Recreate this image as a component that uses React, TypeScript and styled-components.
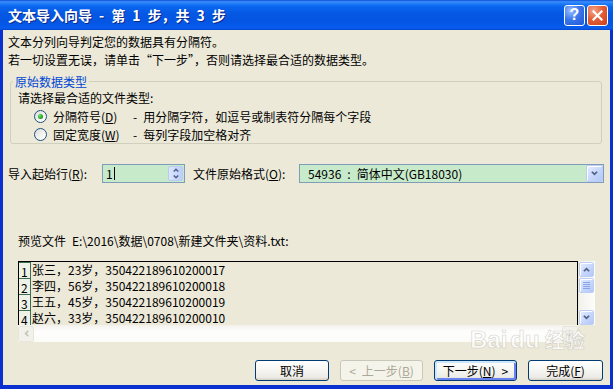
import React from "react";
import styled, { createGlobalStyle } from "styled-components";

const GlobalStyle = createGlobalStyle`
  html, body {
    margin: 0;
    padding: 0;
    background: #ece9d8;
  }
  body {
    font-family: "Noto Sans CJK SC", "Liberation Sans", sans-serif;
    font-size: 12px;
    color: #000;
  }
  * {
    box-sizing: border-box;
  }
`;

const Window = styled.div`
  position: relative;
  width: 613px;
  height: 389px;
  display: flex;
  flex-direction: column;
  overflow: hidden;
  background: #ece9d8;
`;

const TitleBar = styled.div`
  flex: none;
  height: 30px;
  display: flex;
  align-items: center;
  padding: 0 5px 0 8px;
  color: #fff;
  background: linear-gradient(
    to bottom,
    #0a4fd6 0%,
    #3d8ffc 6%,
    #1f7cf8 12%,
    #0a66ee 22%,
    #0558e4 45%,
    #0455e2 70%,
    #0559ea 88%,
    #0a5ef0 93%,
    #0446cd 100%
  );
`;

const TitleText = styled.div`
  flex: 1;
  font-size: 14px;
  font-weight: bold;
  white-space: pre;
  text-shadow: 1px 1px 0 #0c2a8a;
  line-height: 18px;
`;

const CaptionButton = styled.div<{ $kind: "help" | "close" }>`
  width: 21px;
  height: 21px;
  margin-left: 2px;
  border: 1px solid #fff;
  border-radius: 3px;
  display: flex;
  align-items: center;
  justify-content: center;
  color: #fff;
  font-family: "Liberation Sans", sans-serif;
  font-weight: bold;
  font-size: 16px;
  background: ${(p) =>
    p.$kind === "close"
      ? "radial-gradient(circle at 30% 25%, #f3a58c 0%, #e45f37 45%, #c7401a 100%)"
      : "radial-gradient(circle at 30% 25%, #9dc0ff 0%, #3b77ec 45%, #2157d6 100%)"};
`;

const Frame = styled.div`
  flex: 1;
  display: flex;
  flex-direction: column;
  border-style: solid;
  border-color: #0a30cf;
  border-width: 0 3px 4px 3px;
  padding: 3px 6px 0 5px;
`;

const Line = styled.div`
  line-height: 18px;
  white-space: pre;
`;

const GroupBox = styled.fieldset`
  margin: 5px 2px 0 2px;
  padding: 0 0 0 2px;
  border: 1px solid #d0d0bf;
  border-radius: 3px;
  min-width: 0;
`;

const Legend = styled.legend`
  padding: 0 2px;
  color: #0046d5;
  line-height: 15px;
`;

const Prompt = styled.div`
  margin-left: 5px;
  line-height: 18px;
`;

const RadioRow = styled.div`
  display: flex;
  align-items: center;
  height: 18px;
  padding-left: 21px;
  white-space: pre;
`;

const Radio = styled.span<{ $checked?: boolean }>`
  position: relative;
  width: 13px;
  height: 13px;
  border-radius: 50%;
  border: 1px solid #1c5180;
  background: linear-gradient(135deg, #dcdcd7 0%, #f3f3ef 55%, #ffffff 100%);
  flex: none;
  &::after {
    content: "";
    display: ${(p) => (p.$checked ? "block" : "none")};
    position: absolute;
    left: 3px;
    top: 3px;
    width: 5px;
    height: 5px;
    border-radius: 50%;
    background: radial-gradient(circle at 35% 35%, #6fe36f 0%, #21a121 60%, #1a8a1a 100%);
  }
`;

const RadioLabel = styled.span`
  width: 80px;
  margin-left: 6px;
`;

const Access = styled.span`
  text-decoration: underline;
`;

const ImportRow = styled.div`
  display: flex;
  align-items: center;
  height: 19px;
  margin-top: 20px;
`;

const FieldLabel = styled.span<{ $w: number }>`
  width: ${(p) => p.$w}px;
  flex: none;
  white-space: pre;
`;

const Spin = styled.div`
  width: 83px;
  height: 19px;
  margin-right: 8px;
  border: 1px solid #7f9db9;
  background: #c7ebca;
  display: flex;
  align-items: center;
`;

const SpinText = styled.div`
  flex: 1;
  padding-left: 3px;
  display: flex;
  align-items: center;
  line-height: 15px;
`;

const Caret = styled.span`
  width: 1px;
  height: 13px;
  margin-left: 1px;
  background: #000;
`;

const SpinButtons = styled.div`
  width: 15px;
  height: 15px;
  margin-right: 1px;
  display: flex;
  flex-direction: column;
  border: 1px solid #b9cbf3;
  border-radius: 2px;
  background: linear-gradient(to right, #dbe6fe, #bccefa);
  align-items: center;
  justify-content: space-around;
`;

const Combo = styled.div`
  flex: 1;
  height: 19px;
  border: 1px solid #7f9db9;
  background: #c7ebca;
  display: flex;
  align-items: center;
  padding-left: 8px;
  white-space: pre;
`;

const ComboText = styled.span`
  flex: 1;
`;

const XpArrowButton = styled.div<{ $w?: number; $h?: number }>`
  width: ${(p) => p.$w ?? 15}px;
  height: ${(p) => p.$h ?? 15}px;
  flex: none;
  display: flex;
  align-items: center;
  justify-content: center;
  border: 1px solid #bccdf6;
  border-radius: 2px;
  background: linear-gradient(135deg, #e6eefe 0%, #c9d8fc 50%, #b3c8f7 100%);
  box-shadow: inset 1px 1px 0 #fff;
`;

const PreviewLabel = styled.div`
  margin: 49px 0 0 10px;
  line-height: 18px;
  white-space: pre;
`;

const Preview = styled.div`
  margin: 11px 0 0 10px;
  width: 577px;
  display: grid;
  grid-template-columns: 560px 17px;
  grid-template-rows: 64px 17px;
`;

const ListBox = styled.div`
  border: 1px solid #000;
  border-bottom: none;
  background: #ece9d8;
  overflow: hidden;
`;

const DataRow = styled.div`
  display: flex;
  height: 16px;
`;

const RowNum = styled.div`
  width: 12px;
  flex: none;
  border-top: 1px solid #3d6e50;
  border-right: 1px solid #3d6e50;
  background: #eef1e6;
  padding: 2px 0 0 2px;
  line-height: 13px;
  font-size: 12px;
`;

const RowText = styled.div`
  padding-left: 1px;
  line-height: 16px;
  white-space: pre;
`;

const VScroll = styled.div`
  margin-left: 1px;
  display: flex;
  flex-direction: column;
  padding-top: 1px;
  background: linear-gradient(to right, #f3f1ec, #fdfdfb);
  gap: 1px;
`;

const Track = styled.div`
  flex: 1;
`;

const HScroll = styled.div`
  display: flex;
  justify-content: space-between;
  align-items: center;
  background: linear-gradient(to bottom, #f3f1ec, #fefefe 40%, #fbfbf8);
`;

const DisabledArrow = styled.div`
  width: 16px;
  height: 16px;
  display: flex;
  align-items: center;
  justify-content: center;
  border: 1px solid #e8e6dc;
  border-radius: 2px;
  background: #f2f1ea;
`;

const ButtonRow = styled.div`
  display: flex;
  justify-content: flex-end;
  gap: 11px;
  margin: 18px 1px 0 0;
`;

const DialogButton = styled.div<{ $w: number; $variant?: "default" | "disabled" }>`
  width: ${(p) => p.$w}px;
  height: 21px;
  display: flex;
  align-items: center;
  justify-content: center;
  white-space: pre;
  border: 1px solid ${(p) => (p.$variant === "disabled" ? "#c9c7ba" : "#003c74")};
  border-radius: 3px;
  color: ${(p) => (p.$variant === "disabled" ? "#aca899" : "#000")};
  background: ${(p) =>
    p.$variant === "disabled"
      ? "#f5f4ea"
      : "linear-gradient(to bottom, #ffffff 0%, #f7f7f4 40%, #ecebe6 85%, #d6d0c5 100%)"};
  box-shadow: ${(p) =>
    p.$variant === "default"
      ? "inset 1px 1px 0 1px #cee7ff, inset -1px -1px 0 1px #6982ee"
      : "none"};
`;

const Watermark = styled.div`
  position: absolute;
  left: 470px;
  top: 326px;
  display: flex;
  align-items: flex-end;
  gap: 3px;
  color: rgba(255, 255, 255, 0.75);
  -webkit-text-stroke: 0.6px rgba(190, 188, 178, 0.7);
  font-family: "Liberation Sans", sans-serif;
  font-weight: bold;
  font-size: 24px;
  line-height: 28px;
  pointer-events: none;
`;

const WatermarkCjk = styled.span`
  font-family: "Noto Sans CJK SC", sans-serif;
  font-size: 20px;
  margin-left: 2px;
`;

const Chevron = ({ dir, color = "#4d6185", size = 7 }: { dir: "up" | "down" | "left" | "right"; color?: string; size?: number }) => {
  const rot = { up: 0, right: 90, down: 180, left: 270 }[dir];
  return (
    <svg width={size} height={size} viewBox="0 0 8 8" style={{ transform: `rotate(${rot}deg)` }}>
      <path d="M1 6 L4 3 L7 6" fill="none" stroke={color} strokeWidth="2" />
    </svg>
  );
};

const rows = [
  ["1", "张三，23岁，350422189610200017"],
  ["2", "李四，56岁，350422189610200018"],
  ["3", "王五，45岁，350422189610200019"],
  ["4", "赵六，33岁，350422189610200010"],
];

export default function App() {
  return (
    <Window>
      <GlobalStyle />
      <TitleBar>
        <TitleText>{"文本导入向导\u2002-\u2002第\u20021\u2002步，共\u20023\u2002步"}</TitleText>
        <CaptionButton $kind="help">?</CaptionButton>
        <CaptionButton $kind="close">
          <svg width="11" height="11" viewBox="0 0 11 11">
            <path d="M1.5 1.5 L9.5 9.5 M9.5 1.5 L1.5 9.5" stroke="#fff" strokeWidth="2.2" strokeLinecap="square" />
          </svg>
        </CaptionButton>
      </TitleBar>
      <Frame>
        <Line>文本分列向导判定您的数据具有分隔符。</Line>
        <Line>若一切设置无误，请单击“下一步”，否则请选择最合适的数据类型。</Line>

        <GroupBox>
          <Legend>原始数据类型</Legend>
          <Prompt>请选择最合适的文件类型:</Prompt>
          <RadioRow>
            <Radio $checked />
            <RadioLabel>
              分隔符号(<Access>D</Access>)
            </RadioLabel>
            <span>{"-\u2002用分隔字符，如逗号或制表符分隔每个字段"}</span>
          </RadioRow>
          <RadioRow>
            <Radio />
            <RadioLabel>
              固定宽度(<Access>W</Access>)
            </RadioLabel>
            <span>{"-\u2002每列字段加空格对齐"}</span>
          </RadioRow>
        </GroupBox>

        <ImportRow>
          <FieldLabel $w={94}>
            导入起始行(<Access>R</Access>):
          </FieldLabel>
          <Spin>
            <SpinText>
              1<Caret />
            </SpinText>
            <SpinButtons>
              <Chevron dir="up" size={6} />
              <Chevron dir="down" size={6} />
            </SpinButtons>
          </Spin>
          <FieldLabel $w={106}>
            文件原始格式(<Access>O</Access>):
          </FieldLabel>
          <Combo>
            <ComboText>{"54936\u2002:\u2002简体中文(GB18030)"}</ComboText>
            <XpArrowButton $w={17} $h={17}>
              <Chevron dir="down" />
            </XpArrowButton>
          </Combo>
        </ImportRow>

        <PreviewLabel>{"预览文件\u2002E:\\2016\\数据\\0708\\新建文件夹\\资料.txt:"}</PreviewLabel>

        <Preview>
          <ListBox>
            {rows.map(([n, text]) => (
              <DataRow key={n}>
                <RowNum>{n}</RowNum>
                <RowText>{text}</RowText>
              </DataRow>
            ))}
          </ListBox>
          <VScroll>
            <XpArrowButton>
              <Chevron dir="up" />
            </XpArrowButton>
            <XpArrowButton>
              <svg width="7" height="7" viewBox="0 0 7 7">
                <path d="M0 0.5 H7 M0 2.5 H7 M0 4.5 H7 M0 6.5 H7" stroke="#8aa6e8" strokeWidth="1" />
              </svg>
            </XpArrowButton>
            <Track />
            <XpArrowButton>
              <Chevron dir="down" />
            </XpArrowButton>
          </VScroll>
          <HScroll>
            <DisabledArrow>
              <Chevron dir="left" color="#c9c7ba" />
            </DisabledArrow>
            <DisabledArrow>
              <Chevron dir="right" color="#c9c7ba" />
            </DisabledArrow>
          </HScroll>
          <div />
        </Preview>

        <ButtonRow>
          <DialogButton $w={74}>取消</DialogButton>
          <DialogButton $w={83} $variant="disabled">
            {"<\u2002上一步("}
            <Access>B</Access>)
          </DialogButton>
          <DialogButton $w={83} $variant="default">
            下一步(<Access>N</Access>)<span>{"\u2002>"}</span>
          </DialogButton>
          <DialogButton $w={75}>
            完成(<Access>F</Access>)
          </DialogButton>
        </ButtonRow>
      </Frame>
      <Watermark>
        <span>Bai</span>
        <span>du</span>
        <WatermarkCjk>经验</WatermarkCjk>
      </Watermark>
    </Window>
  );
}
